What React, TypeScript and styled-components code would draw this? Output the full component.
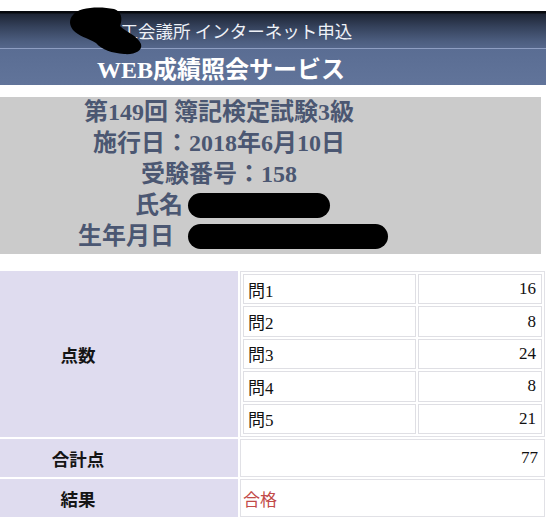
import React from "react";
import styled, { createGlobalStyle } from "styled-components";

const GlobalStyle = createGlobalStyle`
  html, body { margin: 0; padding: 0; background: #ffffff; }
  body { font-family: "Liberation Serif", "Noto Sans CJK JP", serif; }
  * { box-sizing: border-box; }
`;

const Page = styled.div`
  position: relative;
  width: 546px;
  padding-top: 11px;
`;

const Header = styled.header`
  display: flex;
  flex-direction: column;
`;

const HeaderTop = styled.div`
  height: 38px;
  display: flex;
  align-items: center;
  padding-left: 103px;
  padding-top: 2px;
  background: linear-gradient(
    #07090e 0px,
    #07090e 2px,
    #1e2535 3px,
    #35425c 16px,
    #4c5d7f 30px,
    #55678b 37px
  );
  border-bottom: 1px solid #8e9ec2;
  color: #eef1f7;
  font-size: 17.5px;
  white-space: nowrap;
`;

const HeaderBottom = styled.div`
  height: 36px;
  display: flex;
  align-items: center;
  padding-left: 97px;
  background: linear-gradient(#5a6d93, #61749a);
  color: #ffffff;
  font-size: 24px;
  font-weight: 700;
  white-space: nowrap;
`;

const InfoBox = styled.section`
  margin-top: 12px;
  width: 541px;
  height: 157px;
  padding-right: 103px;
  background: #cbcbcb;
  color: #4b5772;
  font-size: 24px;
  font-weight: 700;
  line-height: 31px;
  text-align: center;
`;

const InfoLine = styled.div`
  white-space: nowrap;
`;

const Redaction = styled.span<{ $w: number; $gap: number; $pull: number }>`
  display: inline-block;
  width: ${(p) => p.$w}px;
  height: 25px;
  margin-left: ${(p) => p.$gap}px;
  margin-right: ${(p) => -p.$pull}px;
  vertical-align: -5px;
  background: #000;
  border-radius: 13px;
`;

const ScoreGrid = styled.section`
  margin-top: 17px;
  width: 545px;
  display: grid;
  grid-template-columns: 238px 1fr;
  grid-template-rows: 166px 38px 38px;
  gap: 2px;
`;

const LabelCell = styled.div`
  background: #dfdcef;
  display: flex;
  align-items: center;
  justify-content: center;
  padding-right: 82px;
  font-size: 17.5px;
  font-weight: 700;
  color: #151515;
`;

const ValueCell = styled.div<{ $align?: "left" | "right"; $color?: string }>`
  border: 1px solid #e1e1e6;
  display: flex;
  align-items: center;
  justify-content: ${(p) => (p.$align === "right" ? "flex-end" : "flex-start")};
  padding: ${(p) => (p.$align === "right" ? "0 6px 0 0" : "0 0 0 2px")};
  font-size: 17px;
  color: ${(p) => p.$color ?? "#111"};
`;

const NestedCell = styled.div`
  border: 1px solid #e1e1e6;
  padding: 2px;
  display: grid;
  grid-template-columns: 173px 1fr;
  grid-auto-rows: 1fr;
  gap: 2px;
`;

const SubCell = styled.div<{ $right?: boolean }>`
  border: 1px solid #dfdfe4;
  display: flex;
  align-items: center;
  justify-content: ${(p) => (p.$right ? "flex-end" : "flex-start")};
  padding: ${(p) => (p.$right ? "0 5px 0 0" : "0 0 0 4px")};
  font-size: 17px;
  color: #111;
`;

const BlobLayer = styled.svg`
  position: absolute;
  left: 0;
  top: 0;
  pointer-events: none;
`;

const scores: [string, number][] = [
  ["問1", 16],
  ["問2", 8],
  ["問3", 24],
  ["問4", 8],
  ["問5", 21],
];

export default function App() {
  return (
    <>
      <GlobalStyle />
      <Page>
        <Header>
          <HeaderTop>商工会議所 インターネット申込</HeaderTop>
          <HeaderBottom>WEB成績照会サービス</HeaderBottom>
        </Header>

        <InfoBox>
          <InfoLine>第149回 簿記検定試験3級</InfoLine>
          <InfoLine>施行日：2018年6月10日</InfoLine>
          <InfoLine>受験番号：158</InfoLine>
          <InfoLine>
            氏名
            <Redaction $w={142} $gap={5} $pull={27} />
          </InfoLine>
          <InfoLine>
            生年月日
            <Redaction $w={200} $gap={14} $pull={28} />
          </InfoLine>
        </InfoBox>

        <ScoreGrid>
          <LabelCell>点数</LabelCell>
          <NestedCell>
            {scores.map(([q, s]) => (
              <React.Fragment key={q}>
                <SubCell>{q}</SubCell>
                <SubCell $right>{s}</SubCell>
              </React.Fragment>
            ))}
          </NestedCell>
          <LabelCell>合計点</LabelCell>
          <ValueCell $align="right">77</ValueCell>
          <LabelCell>結果</LabelCell>
          <ValueCell $color="#c24a47">合格</ValueCell>
        </ScoreGrid>

        <BlobLayer width="546" height="60" viewBox="0 0 546 60">
          <path
            d="M73 15 C78 7 100 6 114 9 C121 11 123 18 120 26 C126 32 138 36 141 44 C143 51 134 55 124 54 C112 53 102 50 96 43 C88 38 78 36 73 30 C69 25 69 19 73 15 Z"
            fill="#000"
          />
        </BlobLayer>
      </Page>
    </>
  );
}
